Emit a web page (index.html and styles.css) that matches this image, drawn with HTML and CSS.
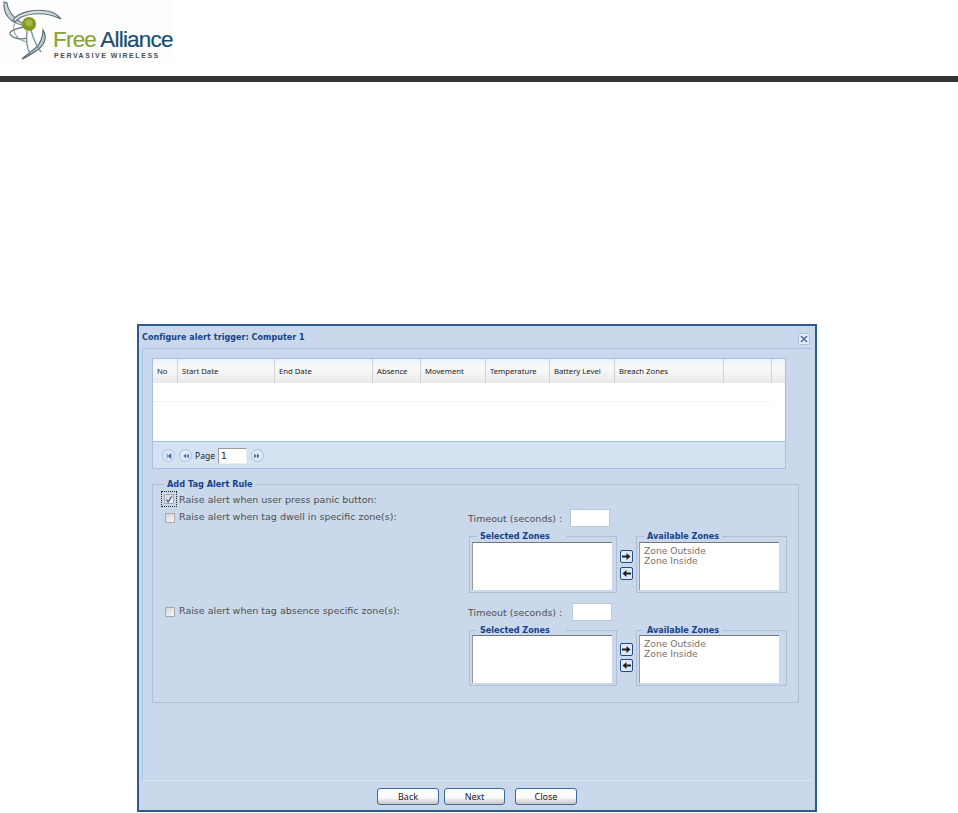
FILE: index.html
```html
<!DOCTYPE html>
<html lang="en">
<head>
<meta charset="utf-8">
<title>Configure alert trigger</title>
<link rel="stylesheet" href="styles.css">
</head>
<body>
<header class="brand">
  <div class="logo">
    <svg class="logo-mark" width="62" height="63" viewBox="0 0 62 63" fill="none">
      <path d="M3 2C2 12 7 24 26 26C18 21 8 16 6 3Z" fill="#c9d3d6" stroke="#5f6f78" stroke-width="1.1"/>
      <path d="M12 20C18 11 36 9 46 11C52 12 57 15 60 19C52 15 42 13 32 14C24 15 18 17 14 22Z" fill="#d5dcdd" stroke="#5f7078" stroke-width="1.1"/>
      <path d="M42 30C47 38 43 46 35 51C30 54 26 57 21 59C28 52 34 50 38 44C41 39 42 35 42 30Z" fill="#b9c7cb" stroke="#4f656e" stroke-width="1.1"/>
      <path d="M23 27C14 29 8 31 9 34C11 38 19 40 26 38" stroke="#66787f" stroke-width="1.3"/>
      <path d="M14 22C10 32 16 40 26 42" stroke="#8a9aa0" stroke-width="1.1"/>
      <path d="M30 30C32 38 34 44 40 52M26 31C25 40 26 48 29 54" stroke="#76909a" stroke-width="1.3"/>
      <circle cx="28" cy="24" r="7" fill="#7f9a22"/>
      <circle cx="28" cy="23" r="3.5" fill="#a3ba3e"/>
    </svg>
    <div class="logo-words">
      <div class="logo-name"><span class="logo-free">Free</span> <span class="logo-alliance">Alliance</span></div>
      <div class="logo-tag">PERVASIVE WIRELESS</div>
    </div>
  </div>
  <div class="rule-bar"></div>
</header>

<main class="window">
  <div class="window-title">
    <span>Configure alert trigger: Computer 1</span>
    <button class="close-x" type="button" aria-label="Close">
      <svg width="10" height="10" viewBox="0 0 10 10"><path d="M2 2L8 8M8 2L2 8" stroke="#4d6f9e" stroke-width="1.6"/></svg>
    </button>
  </div>
  <div class="window-body">
    <section class="grid">
      <div class="grid-head">
        <div class="col c1">No</div>
        <div class="col c2">Start Date</div>
        <div class="col c3">End Date</div>
        <div class="col c4">Absence</div>
        <div class="col c5">Movement</div>
        <div class="col c6">Temperature</div>
        <div class="col c7">Battery Level</div>
        <div class="col c8">Breach Zones</div>
        <div class="col c9"></div>
        <div class="col c10"></div>
      </div>
      <div class="grid-body"><div class="grid-row"></div></div>
      <div class="pager">
        <span class="page-btn"><svg width="8" height="8" viewBox="0 0 10 10"><path d="M2.5 2V8M7.5 2L4 5L7.5 8Z" fill="#3f6aa8" stroke="#3f6aa8"/></svg></span>
        <span class="page-btn"><svg width="8" height="8" viewBox="0 0 10 10"><path d="M5 2L2 5L5 8ZM8.5 2L5.5 5L8.5 8Z" fill="#3f6aa8"/></svg></span>
        <span class="page-label">Page</span>
        <input class="page-input" type="text" value="1" aria-label="Page">
        <span class="page-btn next"><svg width="8" height="8" viewBox="0 0 10 10"><path d="M1.5 2L4.5 5L1.5 8ZM5 2L8 5L5 8Z" fill="#3f6aa8"/></svg></span>
      </div>
    </section>

    <fieldset class="rules">
      <legend>Add Tag Alert Rule</legend>
      <div class="rule rule-first">
        <span class="focus-ring"><span class="check"><svg width="9" height="9" viewBox="0 0 9 9"><path d="M1.5 4.5L3.5 7.5L7.5 .8" fill="none" stroke="#3a5aa0" stroke-width="1.4"/></svg></span></span>
        <span class="rule-text">Raise alert when user press panic button:</span>
      </div>

      <div class="rule rule-zone">
        <div class="rule-left"><span class="check low"></span><span class="rule-text">Raise alert when tag dwell in specific zone(s):</span></div>
        <div class="zone-side">
          <div class="timeout"><span>Timeout (seconds) :</span><input class="timeout-input" type="text" aria-label="Timeout"></div>
          <div class="zone-row">
            <fieldset class="zone-box"><legend>Selected Zones</legend><div class="list"></div></fieldset>
            <div class="moves">
              <span class="move"><svg width="9" height="9" viewBox="0 0 9 9"><path d="M0 3.5H4.5V1L8.5 4.5L4.5 8V5.5H0Z" fill="#222"/></svg></span>
              <span class="move"><svg width="9" height="9" viewBox="0 0 9 9"><path d="M9 3.5H4.5V1L.5 4.5L4.5 8V5.5H9Z" fill="#222"/></svg></span>
            </div>
            <fieldset class="zone-box"><legend>Available Zones</legend><div class="list"><div>Zone Outside</div><div>Zone Inside</div></div></fieldset>
          </div>
        </div>
      </div>

      <div class="rule rule-zone second">
        <div class="rule-left"><span class="check low"></span><span class="rule-text">Raise alert when tag absence specific zone(s):</span></div>
        <div class="zone-side">
          <div class="timeout wide"><span>Timeout (seconds) :</span><input class="timeout-input" type="text" aria-label="Timeout"></div>
          <div class="zone-row">
            <fieldset class="zone-box"><legend>Selected Zones</legend><div class="list"></div></fieldset>
            <div class="moves">
              <span class="move"><svg width="9" height="9" viewBox="0 0 9 9"><path d="M0 3.5H4.5V1L8.5 4.5L4.5 8V5.5H0Z" fill="#222"/></svg></span>
              <span class="move"><svg width="9" height="9" viewBox="0 0 9 9"><path d="M9 3.5H4.5V1L.5 4.5L4.5 8V5.5H9Z" fill="#222"/></svg></span>
            </div>
            <fieldset class="zone-box"><legend>Available Zones</legend><div class="list"><div>Zone Outside</div><div>Zone Inside</div></div></fieldset>
          </div>
        </div>
      </div>
    </fieldset>
  </div>
  <footer class="window-foot">
    <button class="btn" type="button">Back</button>
    <button class="btn btn-next" type="button">Next</button>
    <button class="btn btn-close" type="button">Close</button>
  </footer>
</main>
</body>
</html>
```
FILE: styles.css
```css
* { box-sizing: border-box; }
html, body { margin: 0; padding: 0; background: #fff; }
body { font-family: "DejaVu Sans", sans-serif; height: 813px; overflow: hidden; }

.brand { height: 324px; }
.logo { width: 172px; height: 63px; background: #fdfdfd; display: flex; }
.logo-mark { flex: none; margin-left: 1px; }
.logo-words { margin: 28px 0 0 -10px; }
.logo-name { font: 500 22.5px/24px "Liberation Sans", sans-serif; letter-spacing: -.8px; white-space: nowrap; -webkit-text-stroke: .2px currentColor; }
.logo-free { color: #8aa33a; }
.logo-alliance { color: #17506e; }
.logo-tag { font: bold 7px/8px "Liberation Sans", sans-serif; letter-spacing: 1.55px; margin-left: 1px; color: #4a4f55; white-space: nowrap; }
.rule-bar { height: 6px; margin-top: 13px; background: #333; }

.window {
  width: 680px; height: 488px; margin-left: 137px;
  border: 2px solid #2f5a8c;
  background: #c9d8ea;
  display: flex; flex-direction: column;
}
.window-title {
  height: 22px; padding: 0 5px 0 3px;
  display: flex; align-items: center; justify-content: space-between;
  font-size: 8px; font-weight: bold; letter-spacing: .05px; color: #15428b;
}
.close-x {
  width: 12px; height: 12px; padding: 0; margin-top: 4px;
  border: 1px solid #a9c0de; border-radius: 2px;
  background: #e4edf8; display: flex; align-items: center; justify-content: center;
}
.window-body {
  flex: 1; margin: 0 3px; padding: 9px 10px 0 9px;
  border: 1px solid #a8c3e6; border-bottom: 0;
  border-right-color: #c9d8ea;
}
.grid { width: 634px; height: 111px; border: 1px solid #a3bfe2; background: #fff; display: flex; flex-direction: column; }
.grid-head { height: 24px; flex: none; display: flex; background: linear-gradient(#eef3fa 0 4px, #f7f7f7 4px 12px, #e9e9ec); }
.col { height: 100%; padding-left: 4px; border-right: 1px solid #d0d0d0; font: 7.7px/25px "Noto Sans", sans-serif; color: #222; white-space: nowrap; }
.c1 { width: 25px; } .c2 { width: 97px; } .c3 { width: 98px; } .c4 { width: 48px; }
.c5 { width: 65px; } .c6 { width: 64px; } .c7 { width: 65px; } .c8 { width: 109px; } .c9 { width: 48px; }
.c10 { width: 13px; border-right: 0; }
.grid-body { flex: 1; }
.grid-row { height: 19px; width: 617px; border-bottom: 1px solid #f1f1f1; }
.pager {
  height: 27px; flex: none; padding: 1px 0 0 9px;
  display: flex; align-items: center;
  background: #d5e2f2; border-top: 1px solid #a3bfe2;
  font: 8.5px "Noto Sans", sans-serif; color: #222;
}
.page-btn {
  width: 13px; height: 13px; border-radius: 50%; margin-right: 4px;
  background: #dfe9f6; border: 1px solid #a9c2e2;
  display: flex; align-items: center; justify-content: center;
}
.page-btn svg { flex: none; }
.page-label { margin-right: 3px; margin-left: -1px; }
.page-input {
  width: 29px; height: 16px; padding: 0 2px; margin-right: 4px;
  border: 1px solid #9a9a9a; border-right-color: #eee; border-bottom-color: #eee;
  font: 9px "DejaVu Sans", sans-serif; color: #222; background: #fff;
}
.page-btn.next { margin-right: 0; }

.rules {
  width: 647px; height: 224px; margin: 10px 0 0; padding: 0 12px 0 7px;
  border: 1px solid #b2bfd3; min-width: 0;
}
.rules > legend { margin-left: 4px; padding: 0 3px; font-size: 8.2px; font-weight: bold; color: #15428b; line-height: 10px; }
.rule-text { font-size: 9.5px; color: #505050; white-space: nowrap; }
.rule { display: flex; }
.rule-first { height: 16px; align-items: center; margin: 2px 0 0 1px; }
.focus-ring { width: 16px; height: 16px; margin-right: 2px; border: 1px dotted #222; display: flex; align-items: center; justify-content: center; }
.check { flex: none; width: 10px; height: 10px; border: 1px solid #a9a9a9; background: linear-gradient(135deg, #d7d7d7, #f5f5f5); display: flex; align-items: center; justify-content: center; }
.check.low { margin-top: 4px; }
.rule-zone { margin-top: 2px; }
.rule-left { display: flex; align-items: center; height: 12px; width: 306px; flex: none; padding-left: 5px; gap: 4px; margin-top: 1px; }
.zone-side { padding-left: 2px; }
.timeout { display: flex; align-items: center; gap: 8px; height: 18px; font-size: 9.5px; color: #505050; white-space: nowrap; }
.timeout.wide { gap: 10px; }
.timeout-input { width: 40px; height: 18px; border: 1px solid #bcc8d8; background: #fff; padding: 0; }
.zone-row { display: flex; align-items: flex-start; margin: 5px 0 0 1px; }
.zone-box {
  width: 148px; height: 61px; margin: 0; padding: 1px 0 0 2px;
  border: 1px solid #b2bfd3; min-width: 0;
}
.zone-box > legend { margin-left: 5px; padding: 0 3px; font-size: 8.1px; font-weight: bold; color: #15428b; line-height: 9px; }
.zone-box:first-child > legend { padding-right: 16px; }
.zone-row .zone-box:last-child { width: 151px; }
.list {
  width: 140px; height: 48px; background: #fff; padding: 3px 4px;
  border-top: 1px solid #777; border-left: 1px solid #999;
  font-size: 9.2px; line-height: 10px; color: #7a6f6a;
}
.moves { width: 13px; margin: 0 3px; padding-top: 18px; display: flex; flex-direction: column; gap: 4px; flex: none; }
.move { width: 13px; height: 13px; border: 1px solid #1f4f80; border-radius: 2px; background: #dfe8f4; display: flex; align-items: center; justify-content: center; }
.second { margin-top: 10px; }
.second .zone-box { height: 60px; padding-top: 0; }
.second .moves { padding-top: 17px; gap: 3px; }

.window-foot {
  height: 30px; flex: none; margin: 0 3px; display: flex; align-items: flex-start;
  padding: 7px 0 0 235px; gap: 5px; border-top: 1px solid #dbe6f5;
}
.btn {
  width: 62px; height: 17px; padding: 0;
  border: 1px solid #3d6a97; border-radius: 3px;
  background: linear-gradient(#fbfbfb 0 9px, #ececec 10px, #c7c7c7);
  font: 9px "Noto Sans", sans-serif; color: #222;
}
.btn-next { width: 61px; }
.btn-close { margin-left: 5px; }
```
